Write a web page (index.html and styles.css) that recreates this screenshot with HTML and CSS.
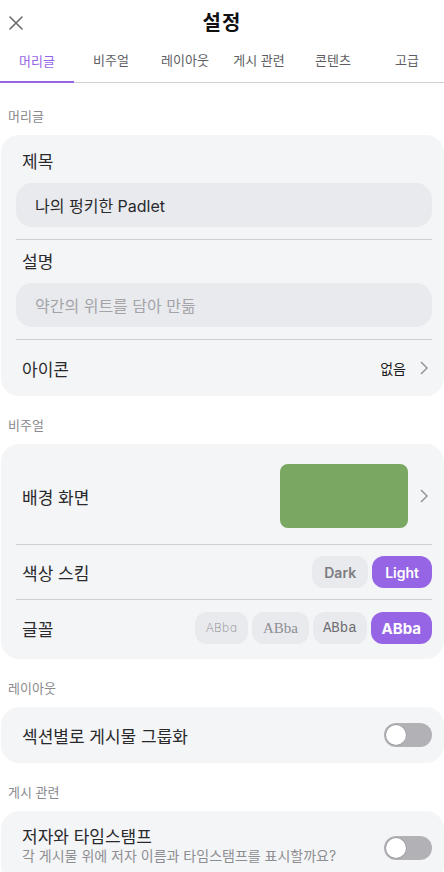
FILE: index.html
```html
<!DOCTYPE html>
<html lang="ko">
<head>
  <meta charset="UTF-8">
  <meta name="viewport" content="width=device-width, initial-scale=1">
  <title>설정</title>
  <link rel="stylesheet" href="styles.css">
</head>
<body>
  <header class="topbar">
    <button class="close-btn" aria-label="닫기">
      <svg width="14" height="14" viewBox="0 0 14 14"><path d="M1 1L13 13M13 1L1 13" stroke="#6b6b6f" stroke-width="1.6" stroke-linecap="round"/></svg>
    </button>
    <h1>설정</h1>
  </header>

  <nav class="tabs">
    <a class="tab active">머리글</a>
    <a class="tab">비주얼</a>
    <a class="tab">레이아웃</a>
    <a class="tab">게시 관련</a>
    <a class="tab">콘텐츠</a>
    <a class="tab">고급</a>
  </nav>

  <main>
    <h2 class="section-label first">머리글</h2>
    <section class="card">
      <div class="field">
        <label>제목</label>
        <div class="input">나의 펑키한 Padlet</div>
      </div>
      <div class="field">
        <label>설명</label>
        <div class="input placeholder">약간의 위트를 담아 만듦</div>
      </div>
      <div class="row">
        <span class="row-title">아이콘</span>
        <span class="row-value">없음
          <svg class="chev" width="8" height="14" viewBox="0 0 8 14"><path d="M1 1L7 7L1 13" fill="none" stroke="#8a8a8e" stroke-width="1.3"/></svg>
        </span>
      </div>
    </section>

    <h2 class="section-label">비주얼</h2>
    <section class="card">
      <div class="row wallpaper">
        <span class="row-title">배경 화면</span>
        <span class="row-value">
          <span class="swatch"></span>
          <svg class="chev" width="8" height="14" viewBox="0 0 8 14"><path d="M1 1L7 7L1 13" fill="none" stroke="#8a8a8e" stroke-width="1.3"/></svg>
        </span>
      </div>
      <div class="row scheme">
        <span class="row-title">색상 스킴</span>
        <div class="pills">
          <span class="pill">Dark</span>
          <span class="pill on">Light</span>
        </div>
      </div>
      <div class="row fonts">
        <span class="row-title">글꼴</span>
        <div class="pills">
          <span class="pill font-round">ABbɑ</span>
          <span class="pill font-serif">ABba</span>
          <span class="pill font-mono">ABba</span>
          <span class="pill on font-bold">ABba</span>
        </div>
      </div>
    </section>

    <h2 class="section-label">레이아웃</h2>
    <section class="card">
      <div class="row single">
        <span class="row-title">섹션별로 게시물 그룹화</span>
        <span class="toggle"><span class="knob"></span></span>
      </div>
    </section>

    <h2 class="section-label">게시 관련</h2>
    <section class="card">
      <div class="row double">
        <div class="row-text">
          <span class="row-title">저자와 타임스탬프</span>
          <span class="row-sub">각 게시물 위에 저자 이름과 타임스탬프를 표시할까요?</span>
        </div>
        <span class="toggle"><span class="knob"></span></span>
      </div>
    </section>
  </main>
</body>
</html>
```

FILE: styles.css
```css
* { margin: 0; padding: 0; box-sizing: border-box; }
body {
  font-family: Inter, "Noto Sans CJK KR", sans-serif;
  background: #ffffff;
  color: #1d1d1f;
  width: 444px;
  overflow: hidden;
}

/* top bar */
.topbar {
  height: 42px;
  display: flex;
  align-items: center;
  justify-content: center;
  position: relative;
}
.topbar h1 {
  font-size: 20px;
  font-weight: 700;
  color: #111;
  letter-spacing: 1px;
}
.close-btn {
  position: absolute;
  left: 9px;
  top: 16px;
  background: none;
  border: none;
  display: flex;
}

/* tabs */
.tabs {
  display: grid;
  grid-template-columns: repeat(6, 1fr);
  height: 41px;
  border-bottom: 1px solid #d0d0d4;
}
.tab {
  display: flex;
  align-items: center;
  justify-content: center;
  font-size: 13px;
  color: #5e5e62;
  padding-bottom: 5px;
}
.tab.active {
  color: #9565e6;
  border-bottom: 2px solid #9565e6;
  margin-bottom: -1px;
  padding-bottom: 3px;
}

/* sections */
.section-label {
  font-size: 13px;
  font-weight: 400;
  color: #8a8a8e;
  line-height: 18px;
  padding: 20px 8px 10px;
}
.section-label.first { padding-top: 24px; }

.card {
  background: #f4f5f7;
  border-radius: 18px;
  margin-left: 1px;
  padding: 0 12px 0 15px;
}

.field {
  padding: 11px 0 12px;
  border-bottom: 1px solid #cfcfd3;
}
.field:first-child { padding-top: 16px; }
.field label {
  display: block;
  font-size: 17px;
  line-height: 22px;
  padding-left: 6px;
  margin-bottom: 10px;
  color: #2a2a2c;
}
.input {
  height: 44px;
  border-radius: 16px;
  background: #e9eaee;
  padding: 0 19px;
  display: flex;
  align-items: center;
  font-size: 16px;
  color: #2a2a2c;
}
.input.placeholder { color: #a4a4a8; }

.row {
  display: flex;
  align-items: center;
  justify-content: space-between;
  height: 56px;
  padding-left: 6px;
  border-bottom: 1px solid #cfcfd3;
}
.row:last-child { border-bottom: none; }
.row-title { font-size: 17px; color: #2a2a2c; }
.row-value {
  display: flex;
  align-items: center;
  gap: 14px;
  font-size: 14px;
  padding-right: 4px;
}
.chev { display: block; }

.wallpaper { height: 101px; padding-top: 4px; }
.wallpaper .row-value { gap: 12px; }
.swatch {
  width: 128px;
  height: 64px;
  border-radius: 8px;
  background: #7aa862;
}
.scheme { height: 55px; }
.fonts { height: 59px; padding-bottom: 3px; }

.pills { display: flex; gap: 4px; }
.pill {
  height: 32px;
  padding: 0 12px;
  border-radius: 12px;
  background: #e9eaee;
  display: flex;
  align-items: center;
  font-size: 14px;
  font-weight: 600;
  color: #7c7c80;
}
.pill.on {
  background: #9565e6;
  color: #fff;
}
.scheme .pill { padding: 0 12px; }
.scheme .pill.on { padding: 0 13px; }
.fonts .pill { padding: 0 10px; }
.fonts .pill.font-round { padding: 0 11px; font-weight: 300; color: #8e8e92; font-family: "DejaVu Sans", sans-serif; font-size: 12px; }
.fonts .pill.font-serif { padding: 0 11px; font-weight: 400; color: #8e8e92; font-family: "Liberation Serif", serif; font-size: 15px; }
.fonts .pill.font-mono { padding: 0 10px; font-weight: 400; color: #6e6e72; font-family: "Liberation Mono", "DejaVu Sans Mono", monospace; font-size: 14px; }
.fonts .pill.font-bold { padding: 0 11px; font-weight: 700; font-size: 15px; }

.single { height: 56px; }
.double {
  height: 72px;
  align-items: flex-start;
  padding-top: 16px;
}
.double .toggle { margin-top: 9px; }
.row-text { display: flex; flex-direction: column; }
.row-text .row-title { line-height: 20px; }
.row-sub {
  font-size: 14px;
  color: #8e8e92;
  line-height: 18px;
}

.toggle {
  width: 48px;
  height: 24px;
  border-radius: 12px;
  background: #b2b2b6;
  display: flex;
  align-items: center;
  padding: 2px;
  flex-shrink: 0;
}
.knob {
  width: 20px;
  height: 20px;
  border-radius: 50%;
  background: #fff;
  box-shadow: 0 0 0 0.5px rgba(0,0,0,0.2);
}
```
